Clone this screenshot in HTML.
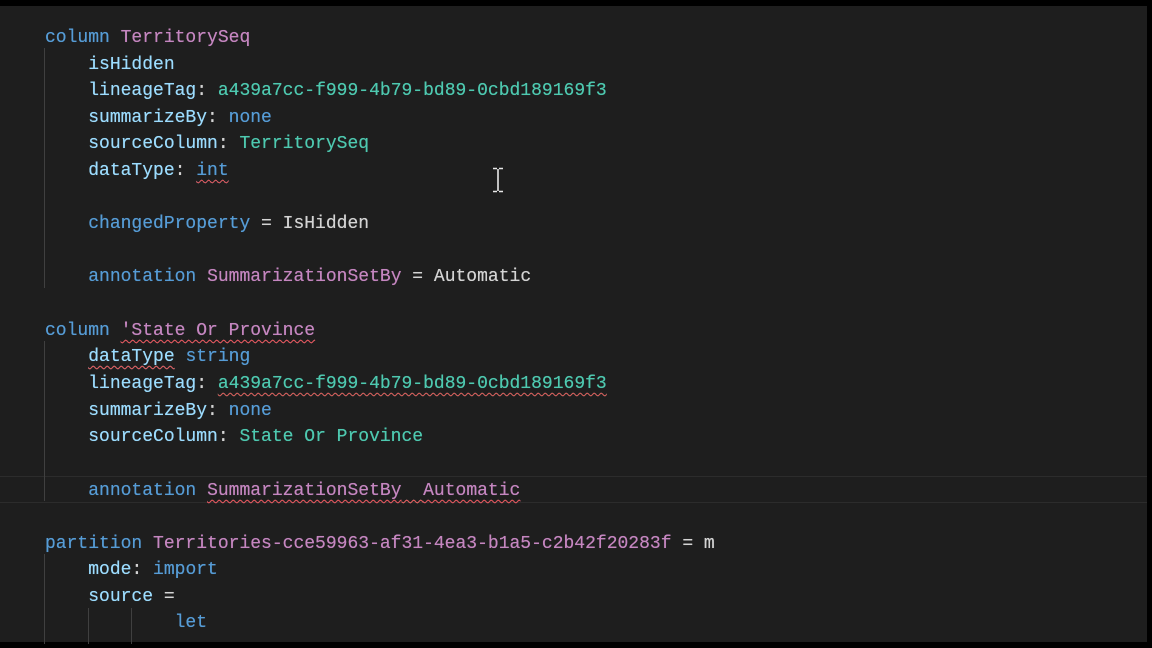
<!DOCTYPE html>
<html><head><meta charset="utf-8"><style>
html,body{margin:0;padding:0;background:#000;}
#wrap{position:relative;width:1152px;height:648px;overflow:hidden;background:#000;}
#ed{position:absolute;left:0;top:6px;width:1147px;height:636px;background:#1e1e1e;}
.l{position:absolute;left:45px;height:27px;line-height:27px;font-family:"Liberation Mono",monospace;font-size:18px;white-space:pre;color:#d4d4d4;text-shadow:0 0 0.4px currentColor;}
.k{color:#569cd6}.p{color:#c586c0}.pr{color:#9cdcfe}.s{color:#4ec9b0}.w{color:#d4d4d4}
.sq{text-decoration:underline wavy #e05050;text-decoration-thickness:1px;text-underline-offset:4px;}
.g{position:absolute;width:1px;background:#404040;}
</style></head><body><div id="wrap"><div id="ed">
<div style="position:absolute;left:0;top:470px;width:1147px;height:25px;border-top:1px solid #2c2c2c;border-bottom:1px solid #2c2c2c;"></div>
<div class="g" style="left:44px;top:42px;height:240px"></div>
<div class="g" style="left:44px;top:335px;height:160px"></div>
<div class="g" style="left:44px;top:548px;height:90px"></div>
<div class="g" style="left:88px;top:602px;height:36px"></div>
<div class="g" style="left:131px;top:602px;height:36px"></div>
</div>
<div class="l" style="top:25px"><span class="k">column</span> <span class="p">TerritorySeq</span></div>
<div class="l" style="top:52px">    <span class="pr">isHidden</span></div>
<div class="l" style="top:78px">    <span class="pr">lineageTag</span>: <span class="s">a439a7cc-f999-4b79-bd89-0cbd189169f3</span></div>
<div class="l" style="top:105px">    <span class="pr">summarizeBy</span>: <span class="k">none</span></div>
<div class="l" style="top:131px">    <span class="pr">sourceColumn</span>: <span class="s">TerritorySeq</span></div>
<div class="l" style="top:158px">    <span class="pr">dataType</span>: <span class="k sq">int</span></div>
<div class="l" style="top:211px">    <span class="k">changedProperty</span> = <span class="w">IsHidden</span></div>
<div class="l" style="top:264px">    <span class="k">annotation</span> <span class="p">SummarizationSetBy</span> = <span class="w">Automatic</span></div>
<div class="l" style="top:318px"><span class="k">column</span> <span class="p sq">'State Or Province</span></div>
<div class="l" style="top:344px">    <span class="pr sq">dataType</span> <span class="k">string</span></div>
<div class="l" style="top:371px">    <span class="pr">lineageTag</span>: <span class="s sq">a439a7cc-f999-4b79-bd89-0cbd189169f3</span></div>
<div class="l" style="top:398px">    <span class="pr">summarizeBy</span>: <span class="k">none</span></div>
<div class="l" style="top:424px">    <span class="pr">sourceColumn</span>: <span class="s">State Or Province</span></div>
<div class="l" style="top:478px">    <span class="k">annotation</span> <span class="sq"><span class="p">SummarizationSetBy</span>  <span class="p">Automatic</span></span></div>
<div class="l" style="top:531px"><span class="k">partition</span> <span class="p">Territories-cce59963-af31-4ea3-b1a5-c2b42f20283f</span> = <span class="w">m</span></div>
<div class="l" style="top:557px">    <span class="pr">mode</span>: <span class="k">import</span></div>
<div class="l" style="top:584px">    <span class="pr">source</span> =</div>
<div class="l" style="top:610px">            <span class="k">let</span></div>
<svg style="position:absolute;left:490px;top:167px" width="16" height="26" viewBox="0 0 16 26"><path d="M3 1.5h4M9 1.5h4M8 2v22M3 24.5h4M9 24.5h4" stroke="#e8e8e8" stroke-width="1.6" fill="none"/></svg>
</div></body></html>
